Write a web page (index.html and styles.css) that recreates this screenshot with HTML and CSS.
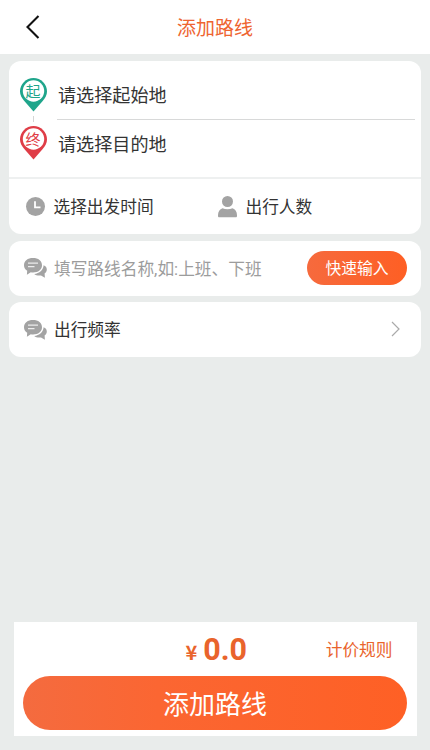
FILE: index.html
```html
<!DOCTYPE html>
<html lang="zh-CN">
<head>
<meta charset="utf-8">
<title>添加路线</title>
<link rel="stylesheet" href="styles.css">
</head>
<body>
<svg class="defs" aria-hidden="true">
  <symbol id="chat" viewBox="0 0 23 20">
    <path d="M19.600 7.200c2 .7 3.200 2.200 3.200 4.200 0 1.600-.8 3-2.200 4l.3 4.400-3.900-2.400c-2.600.5-5.200-.1-6.800-1.500 5.200-.5 9.100-3.900 9.400-8.700z"/>
    <path d="M9 0c5.200 0 9 2.700 9 7.300s-3.800 7.200-9 7.200c-.8 0-1.500-.1-2.200-.2L2.900 16.800l.3-4C1.200 11.600 0 9.700 0 7.300 0 2.700 3.800 0 9 0z"/>
    <path class="chat-lines" d="M4 5.200h10M4 8.600h6.500"/>
  </symbol>
</svg>
<header class="header">
  <svg class="back" viewBox="0 0 14 24"><path d="M12.500 1L1.500 12l11 11"/></svg>
  <h1 class="title">添加路线</h1>
</header>
<main class="content">
  <section class="card trip">
    <div class="places">
      <div class="markers">
        <div class="pin start"><svg viewBox="0 0 27 34"><path d="M13.500 0C20.900 0 27 6 27 13.300c0 3.700-1.800 6.700-4.300 9.800L13.500 33.500 4.300 23.100C1.800 20 0 17 0 13.300 0 6 6.100 0 13.500 0z"/><circle cx="13.500" cy="13" r="10.700"/></svg><span>起</span></div>
        <i class="link"></i>
        <div class="pin end"><svg viewBox="0 0 27 34"><path d="M13.500 0C20.900 0 27 6 27 13.300c0 3.700-1.800 6.700-4.300 9.800L13.500 33.500 4.300 23.100C1.800 20 0 17 0 13.300 0 6 6.100 0 13.500 0z"/><circle cx="13.500" cy="13" r="10.700"/></svg><span>终</span></div>
      </div>
      <div class="fields">
        <div class="place">请选择起始地</div>
        <div class="place">请选择目的地</div>
      </div>
    </div>
    <div class="options">
      <div class="option time">
        <svg class="clock" viewBox="0 0 19 19"><circle cx="9.500" cy="9.500" r="9.500"/><path d="M9 4.300v6h5.500"/></svg>
        <span class="label">选择出发时间</span>
      </div>
      <div class="option">
        <svg class="person" viewBox="0 0 19 22"><circle cx="9.500" cy="5.500" r="5.500"/><path d="M4.500 12.300c3 1.300 7 1.300 10 0 2.800.8 4.500 3.500 4.500 7v.7c0 .8-.5 1.300-1.300 1.300H1.300C.5 21.300 0 20.800 0 20v-.7c0-3.500 1.700-6.200 4.500-7z"/></svg>
        <span class="label">出行人数</span>
      </div>
    </div>
  </section>
  <section class="card row">
    <svg class="chat"><use href="#chat"/></svg>
    <span class="label placeholder">填写路线名称,如:上班、下班</span>
    <button class="quick">快速输入</button>
  </section>
  <section class="card row">
    <svg class="chat"><use href="#chat"/></svg>
    <span class="label">出行频率</span>
    <svg class="more" viewBox="0 0 9 16"><path d="M1 1l7 7-7 7"/></svg>
  </section>
</main>
<footer class="footer">
  <div class="summary">
    <div class="price"><span class="yen">¥</span><span>0.0</span></div>
    <a class="rules">计价规则</a>
  </div>
  <button class="submit">添加路线</button>
</footer>
</body>
</html>
```
FILE: styles.css
```css
* { box-sizing: border-box; }
body {
  margin: 0;
  height: 750px;
  display: flex;
  flex-direction: column;
  overflow: hidden;
  background: #e9eceb;
  color: #333;
  font: 16.7px/24px Roboto, "Noto Sans CJK SC", sans-serif;
}
svg { display: block; flex: none; }
.defs { position: absolute; width: 0; height: 0; }
button { border: 0; padding: 0; color: #fff; font-family: inherit; }

.header {
  height: 54px;
  flex: none;
  display: grid;
  grid-template-columns: 40px 1fr 40px;
  align-items: center;
  background: #fff;
}
.back { width: 14px; height: 24px; margin-left: 26px; fill: none; stroke: #111; stroke-width: 2.100; }
.title { margin: 4px 0 0; text-align: center; font-size: 19px; font-weight: 400; color: #ee6430; }

.content {
  flex: 1;
  display: flex;
  flex-direction: column;
  gap: 6.500px;
  padding: 7px 9px 0;
}
.card { background: #fff; border-radius: 12px; }
.trip { height: 173px; }
.places { display: flex; height: 118px; border-bottom: 2px solid #eef0f0; }
.markers { width: 27px; margin-left: 10.500px; padding-top: 17px; display: flex; flex-direction: column; align-items: center; }
.pin { position: relative; width: 27px; height: 34px; }
.pin svg { width: 27px; height: 34px; }
.pin circle { fill: #fff; }
.pin span { position: absolute; inset: 5px 0 auto; text-align: center; font-size: 15px; line-height: 18px; }
.start { color: #1fa58b; fill: #1fa58b; }
.end { color: #df3d47; fill: #df3d47; }
.link { width: 1px; height: 6px; margin: 4px 0; background: #d5d5d5; }
.fields { flex: 1; margin: 10px 6px 0 10.500px; }
.place { height: 49px; line-height: 50px; font-size: 18.100px; padding-left: 1px; }
.place:first-child { border-bottom: 1px solid #d8d9d9; }

.options { display: flex; height: 55px; align-items: center; padding-left: 16.500px; }
.option { display: flex; align-items: center; }
.label { padding-top: 3px; }
.time { width: 192px; }
.clock { width: 19px; height: 19px; margin-right: 9px; fill: #a3a3a3; }
.clock path { fill: none; stroke: #fff; stroke-width: 1.800; }
.person { width: 19px; height: 22px; margin-right: 9px; fill: #a3a3a3; }

.row { height: 55px; display: flex; align-items: center; padding: 0 14px 0 15px; }
.chat { width: 23px; height: 20px; margin: 0 7px 0 0; fill: #a3a3a3; }
.chat-lines { fill: none; stroke: #ececec; stroke-width: 1.200; }
.placeholder { color: #9c9c9c; }
.quick { width: 100px; height: 34px; margin-left: auto; padding-bottom: 2px; border-radius: 17px; font-size: 15.800px; background: linear-gradient(90deg, #f66a3d, #fe5f24); }
.more { width: 9px; height: 16px; margin: 0 7px 1px auto; fill: none; stroke: #aaa; stroke-width: 1.200; }

.footer { flex: none; margin: 0 13.500px 14px 14px; height: 114px; padding: 0 9px; background: #fff; }
.summary { height: 54px; display: grid; grid-template-columns: 1fr auto 1fr; align-items: center; color: #e9642c; }
.price { grid-column: 2; display: flex; align-items: baseline; gap: 6px; font-size: 30.500px; font-weight: 700; margin: 4px 0 0 2px; }
.yen { font: 700 20px/24px "Noto Sans CJK SC", sans-serif; }
.rules { justify-self: end; margin: 4px 15px 0 0; }
.submit { display: block; width: 384px; height: 54px; padding-bottom: 2px; border-radius: 27px; font-size: 26px; background: linear-gradient(90deg, #f46b3f, #fb6632 35%, #fe6025); }
```
